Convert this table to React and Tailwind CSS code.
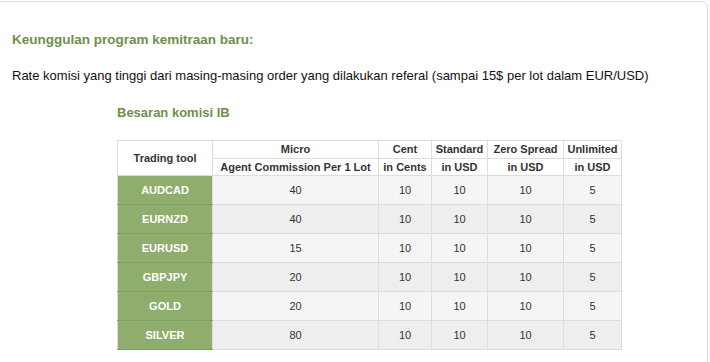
import React from "react";

const rows = [
  ["AUDCAD", "40"],
  ["EURNZD", "40"],
  ["EURUSD", "15"],
  ["GBPJPY", "20"],
  ["GOLD", "20"],
  ["SILVER", "80"],
];

export default function App() {
  return (
    <div className="w-[710px] h-[362px] overflow-hidden bg-white pt-px" style={{ fontFamily: '"Liberation Sans", Arial, sans-serif' }}>
      <div className="ml-[-10px] w-[718px] h-[400px] border border-[#dddddd] rounded-tr-[6px] pl-[21px]">
        <div className="pt-[29px] h-[47px] text-[13.5px] leading-[18px] font-bold text-[#6f8f4c]">
          Keunggulan program kemitraan baru:
        </div>
        <div className="mt-[18px] text-[13px] leading-[18px] text-[#111]">
          Rate komisi yang tinggi dari masing-masing order yang dilakukan referal (sampai 15$ per lot dalam EUR/USD)
        </div>
        <div className="ml-[105px]">
          <div className="mt-[18px] text-[13px] leading-[20px] font-bold text-[#6f8f4c]">Besaran komisi IB</div>
          <table className="mt-[17px] border-collapse text-[11px] leading-[13px] text-[#333] text-center border border-[#dddddd]">
            <colgroup>
              <col className="w-[95px]" />
              <col className="w-[166px]" />
              <col className="w-[53px]" />
              <col className="w-[56px]" />
              <col className="w-[76px]" />
              <col className="w-[58px]" />
            </colgroup>
            <thead className="bg-white font-bold">
              <tr className="h-[18px]">
                <th rowSpan={2} className="border border-[#dddddd] p-0 font-bold">Trading tool</th>
                <th className="border border-[#dddddd] p-0 font-bold">Micro</th>
                <th className="border border-[#dddddd] p-0 font-bold">Cent</th>
                <th className="border border-[#dddddd] p-0 font-bold">Standard</th>
                <th className="border border-[#dddddd] p-0 font-bold">Zero Spread</th>
                <th className="border border-[#dddddd] p-0 font-bold">Unlimited</th>
              </tr>
              <tr className="h-[17px]">
                <th className="border border-[#dddddd] p-0 font-bold">Agent Commission Per 1 Lot</th>
                <th className="border border-[#dddddd] p-0 font-bold">in Cents</th>
                <th className="border border-[#dddddd] p-0 font-bold">in USD</th>
                <th className="border border-[#dddddd] p-0 font-bold">in USD</th>
                <th className="border border-[#dddddd] p-0 font-bold">in USD</th>
              </tr>
            </thead>
            <tbody>
              {rows.map(([name, micro], i) => (
                <tr key={name} className={i % 2 === 0 ? "h-[29px] bg-[#f5f5f5]" : "h-[29px] bg-[#eeeeee]"}>
                  <td className="bg-[#8fae6e] text-white font-bold border-y border-[#7f9e5f] p-0">{name}</td>
                  <td className="border border-[#dddddd] p-0">{micro}</td>
                  <td className="border border-[#dddddd] p-0">10</td>
                  <td className="border border-[#dddddd] p-0">10</td>
                  <td className="border border-[#dddddd] p-0">10</td>
                  <td className="border border-[#dddddd] p-0">5</td>
                </tr>
              ))}
            </tbody>
          </table>
        </div>
      </div>
    </div>
  );
}
